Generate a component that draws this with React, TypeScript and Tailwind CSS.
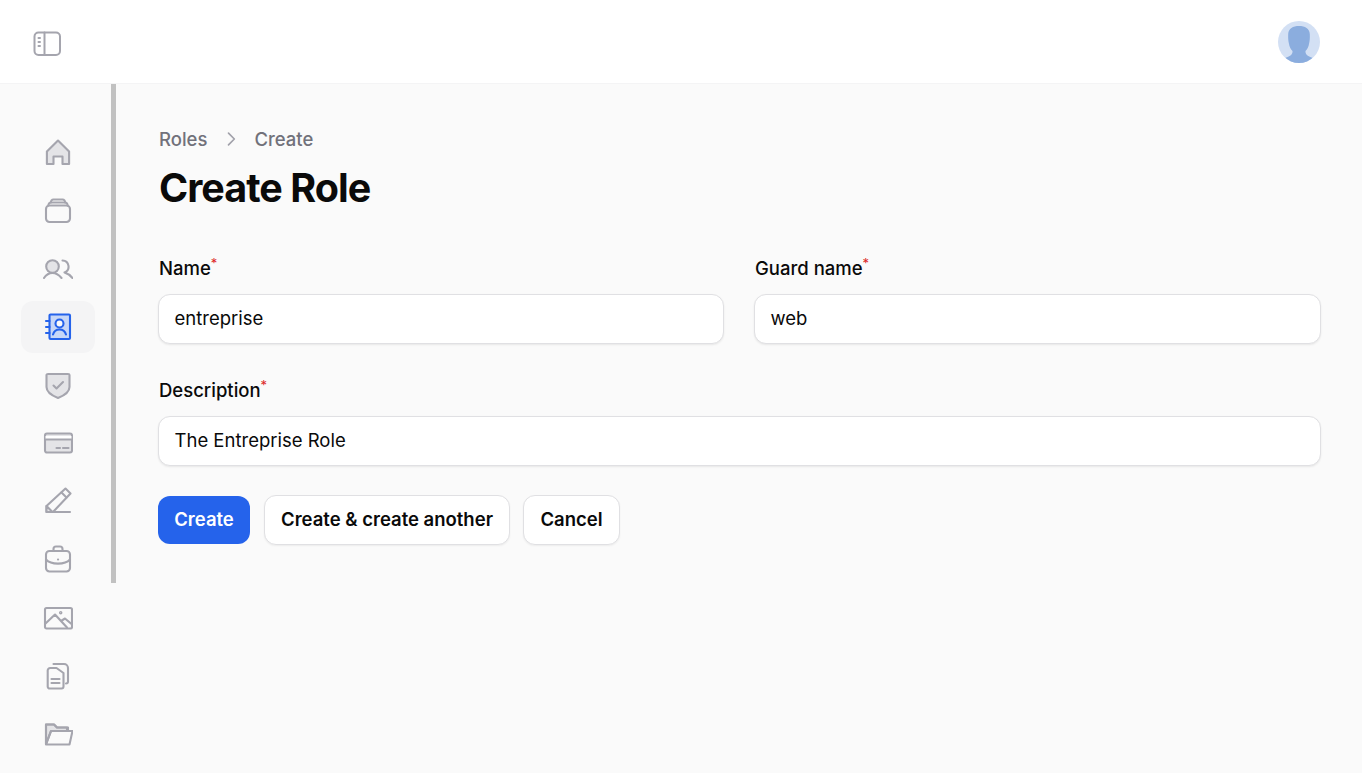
import React from "react";

const iconStroke = "#a5a5ae";
const iconFill = "#e4e4e7";

function NavIcon({ children, active = false }: { children: React.ReactNode; active?: boolean }) {
  return (
    <svg
      viewBox="0 0 30 30"
      className="w-[30px] h-[30px]"
      fill="none"
      stroke={active ? "#2563eb" : iconStroke}
      strokeWidth={2.1}
      strokeLinecap="round"
      strokeLinejoin="round"
    >
      {children}
    </svg>
  );
}

const navItems: { key: string; active?: boolean; icon: React.ReactNode }[] = [
  {
    key: "home",
    icon: (
      <path
        d="M15 3.500 3.900 14.600V27H10.500V19.500H19.500V27H26.100V14.600Z"
        fill={iconFill}
      />
    ),
  },
  {
    key: "stack",
    icon: (
      <>
        <rect x="3" y="10.500" width="24" height="16.500" rx="3.500" />
        <path d="M5.500 10.500A2.500 2.500 0 0 1 8 7.500H22A2.500 2.500 0 0 1 24.500 10.500" />
        <path d="M8 7.500A2.500 2.500 0 0 1 10.500 4.500H19.500A2.500 2.500 0 0 1 22 7.500" />
      </>
    ),
  },
  {
    key: "users",
    icon: (
      <>
        <circle cx="9.500" cy="13.500" r="6.300" fill={iconFill} />
        <path d="M1 25C3 22 6 20 9.500 20S16 22 18.500 25" />
        <path d="M19.500 7.500A6.200 6.200 0 0 1 21.500 19.500C25 20.500 27.500 22.500 29.500 25" />
      </>
    ),
  },
  {
    key: "contacts",
    active: true,
    icon: (
      <>
        <rect x="6.500" y="2.500" width="20.500" height="24.500" rx="1" fill="#c7d7f7" />
        <path d="M3 9H6.500M3 15H6.500M3 21H6.500" />
        <circle cx="16.500" cy="11.500" r="4" fill="#fafafa" />
        <path d="M10 22.500C11 19 13.500 17.500 16.500 17.500S22 19 23 22.500" />
      </>
    ),
  },
  {
    key: "shield",
    icon: (
      <>
        <path
          d="M3.500 5Q3.500 4 5 4H25Q26.500 4 26.500 5V17C26.500 22 20 26 15 28C10 26 3.500 22 3.500 17Z"
          fill={iconFill}
        />
        <path d="M10.500 15.500 13.500 18.500 20 12" />
      </>
    ),
  },
  {
    key: "card",
    icon: (
      <>
        <rect x="2" y="5.500" width="27" height="19" rx="2" fill={iconFill} />
        <path d="M2.500 9.500H28.500" stroke="#ffffff" strokeWidth={3} strokeLinecap="butt" />
        <path d="M2 11.500H29M13.500 20H17M20 20H25.500" />
      </>
    ),
  },
  {
    key: "pencil",
    icon: (
      <>
        <path d="M3.500 26V20L22.500 2.500 27.500 7.500 10 26Z" fill="#fafafa" />
        <path d="M3.500 20 9.500 26 3.500 26Z" fill={iconFill} />
        <path d="M18.500 6.500 23.500 11.500M10 26H27" />
      </>
    ),
  },
  {
    key: "briefcase",
    icon: (
      <>
        <rect x="3" y="7" width="24" height="20.500" rx="3.500" />
        <path d="M3 15.500C8 21 22 21 27 15.500" />
        <path d="M10.500 7V5A2.500 2.500 0 0 1 13 2.500H17A2.500 2.500 0 0 1 19.500 5V7" />
        <path d="M15 15.500H15.100" />
      </>
    ),
  },
  {
    key: "image",
    icon: (
      <>
        <rect x="2" y="5" width="27" height="20.500" rx="1.500" />
        <path d="M2.500 20.500 12 11.500 24 24.500M18 18 22 15.500 28.500 21" />
        <circle cx="17.700" cy="9.700" r="0.700" />
      </>
    ),
  },
  {
    key: "docs",
    icon: (
      <>
        <path d="M10.500 3H21A4 4 0 0 1 25 7V20.500A2 2 0 0 1 23 22.500" />
        <path d="M4.700 9.500A2.500 2.500 0 0 1 7.200 7H13.500L20.500 12V25.500A2 2 0 0 1 18.500 27.500H6.700A2 2 0 0 1 4.700 25.500Z" />
        <path d="M8.500 18H16.500M8.500 22H16.500" />
      </>
    ),
  },
  {
    key: "folder",
    icon: (
      <>
        <path d="M3 25V5.500H11L14 8.500H24V12H8Z" fill={iconFill} />
        <path d="M3 25.500V5.500H11L14 8.500H25V12M8 12H29.500L26.500 25.500H3Z" />
      </>
    ),
  },
];

function Field({ label, value }: { label: string; value: string }) {
  return (
    <div className="flex flex-col">
      <label className="px-px h-[24px] flex items-start text-[18.5px] leading-[24px] font-[480] text-[#0a0a0a]">
        {label}
        <span className="text-[#dc2626] text-[13px] leading-[14px] font-normal">*</span>
      </label>
      <div className="mt-[14px] h-[50px] rounded-[12px] bg-white border-[1.5px] border-[#e0e0e3] shadow-[0_1px_2px_rgba(0,0,0,0.08)] flex items-center px-[15.500px] text-[18.5px] text-[#0a0a0a]">
        {value}
      </div>
    </div>
  );
}

export default function App() {
  return (
    <div className="h-[773px] overflow-hidden flex flex-col bg-[#fafafa] font-['Inter',sans-serif]">
      <header className="h-[84px] shrink-0 bg-white border-b border-[#f4f4f5] flex items-center justify-between pl-[33px] pr-[42px]">
        <svg viewBox="0 0 28 26" className="mt-[4px] w-[28px] h-[26px]" fill="none" stroke="#a5a5ae" strokeWidth={2} strokeLinecap="round">
          <rect x="1.500" y="1.500" width="25.500" height="22.500" rx="4" />
          <path d="M11.500 1.500V24" />
          <path d="M5.500 7H7M5.500 11H7M5.500 15H7" />
        </svg>
        <div className="w-[42px] h-[42px] rounded-full bg-[#d3e0f4] overflow-hidden">
          <svg viewBox="0 0 42 42" className="w-full h-full">
            <path
              d="M21 5C15 5 10.500 7.500 10.200 13C10 17 10.300 20 10.800 22C11.500 26 12.500 28 14.500 30C14.800 33 13 35 7 37L7 42H35L35 37C29 35 27.200 33 27.500 30C29.500 28 30.500 26 31.200 22C31.700 20 32 17 31.800 13C31.500 7.500 27 5 21 5Z"
              fill="#8badde"
            />
          </svg>
        </div>
      </header>

      <div className="flex-1 flex min-h-0">
        <div className="shrink-0 flex items-start">
          <nav className="w-[111px] pt-[53px] flex flex-col items-center gap-[28.200px] pl-[5px]">
            {navItems.map((item) =>
              item.active ? (
                <div key={item.key} className="relative w-[30px] h-[30px]">
                  <div className="absolute -left-[22px] -top-[11px] w-[74px] h-[52px] rounded-[12px] bg-[#f4f4f5]" />
                  <div className="relative">
                    <NavIcon active>{item.icon}</NavIcon>
                  </div>
                </div>
              ) : (
                <NavIcon key={item.key}>{item.icon}</NavIcon>
              )
            )}
          </nav>
          <div className="w-[5px] h-[499px] bg-[#c1c1c1]" />
        </div>

        <main className="flex-1 pl-[42px] pr-[41px] pt-[43px]">
          <div className="flex items-center px-px text-[18.5px] leading-[24px] font-[480] text-[#71717a]">
            <span>Roles</span>
            <svg viewBox="0 0 24 24" className="w-[20px] h-[20px] mx-[13.500px]" fill="none" stroke="#a1a1aa" strokeWidth={2} strokeLinecap="round" strokeLinejoin="round">
              <path d="m9 5 7 7-7 7" />
            </svg>
            <span>Create</span>
          </div>
          <h1 className="mt-[13px] px-px text-[39.500px] leading-[48px] font-bold tracking-[-0.025em] text-[#0a0a0a]">Create Role</h1>

          <div className="mt-[44px] grid grid-cols-[566px_567px] gap-x-[30px]">
            <Field label="Name" value="entreprise" />
            <Field label="Guard name" value="web" />
            <div className="col-span-2 mt-[34px]">
              <Field label="Description" value="The Entreprise Role" />
            </div>
          </div>

          <div className="mt-[29px] flex items-center text-[18.5px] font-semibold">
            <button className="h-[48px] w-[92px] rounded-[12px] bg-[#2563eb] text-white">Create</button>
            <button className="ml-[14px] h-[50px] w-[246px] rounded-[12px] bg-white border-[1.5px] border-[#e0e0e3] shadow-[0_1px_2px_rgba(0,0,0,0.06)] text-[#0a0a0a]">
              Create &amp; create another
            </button>
            <button className="ml-[13px] h-[50px] w-[97px] rounded-[12px] bg-white border-[1.5px] border-[#e0e0e3] shadow-[0_1px_2px_rgba(0,0,0,0.06)] text-[#0a0a0a]">
              Cancel
            </button>
          </div>
        </main>
      </div>
    </div>
  );
}
